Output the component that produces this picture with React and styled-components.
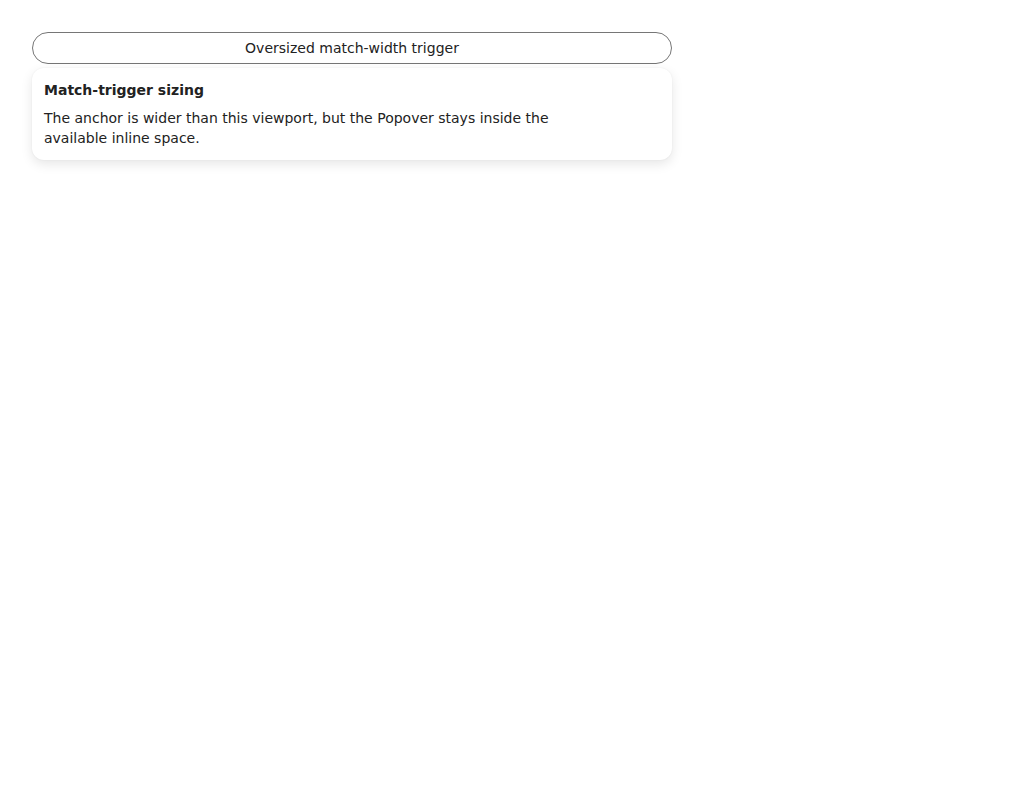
import React from "react";
import styled, { createGlobalStyle } from "styled-components";

const Global = createGlobalStyle`
  html, body { margin: 0; padding: 0; background: #ffffff; }
  body { font-family: "DejaVu Sans", sans-serif; color: #222222; }
`;

const Page = styled.div`
  padding: 32px;
  display: flex;
  flex-direction: column;
  gap: 4px;
  width: 640px;
`;

const Trigger = styled.button`
  width: 640px;
  height: 32px;
  border: 1px solid #767676;
  border-radius: 16px;
  background: #ffffff;
  font-family: "DejaVu Sans", sans-serif;
  font-size: 14px;
  color: #222222;
  padding: 0 12px;
  cursor: pointer;
`;

const Popover = styled.div`
  box-sizing: border-box;
  width: 640px;
  padding: 12px;
  border-radius: 12px;
  background: #ffffff;
  box-shadow: 0 4px 12px rgba(0, 0, 0, 0.1), 0 0 2px rgba(0, 0, 0, 0.06);
  display: flex;
  flex-direction: column;
  gap: 8px;
`;

const Title = styled.div`
  font-weight: bold;
  font-size: 14px;
  line-height: 20px;
  color: #222222;
`;

const Body = styled.p`
  margin: 0;
  font-size: 14px;
  line-height: 20px;
  color: #222222;
  max-width: 530px;
`;

export default function App() {
  return (
    <>
      <Global />
      <Page>
        <Trigger>Oversized match-width trigger</Trigger>
        <Popover>
          <Title>Match-trigger sizing</Title>
          <Body>
            The anchor is wider than this viewport, but the Popover stays inside the available inline space.
          </Body>
        </Popover>
      </Page>
    </>
  );
}
